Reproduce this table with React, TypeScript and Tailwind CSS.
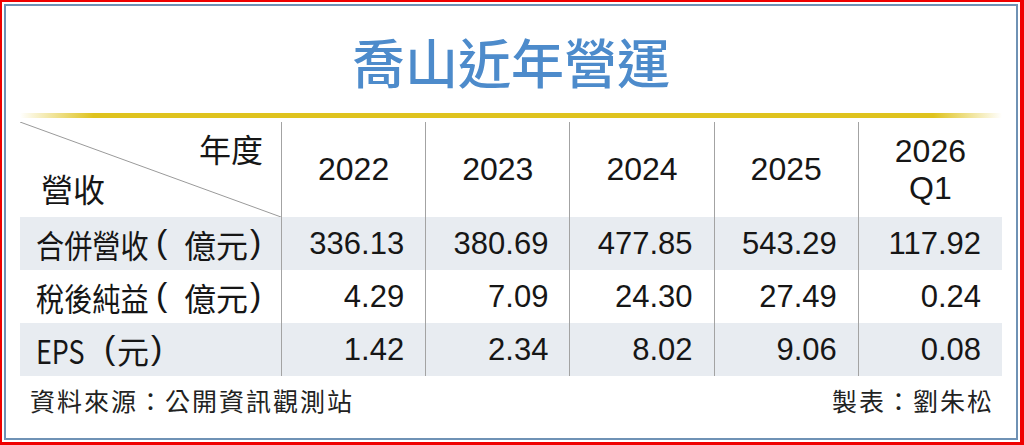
import React from "react";

const CJK = "font-['Noto_Sans_CJK_TC','Noto_Sans_CJK_SC',sans-serif]";
const NUM = "font-['Liberation_Sans','Arial',sans-serif]";

const years: { a: string; b?: string }[] = [
  { a: "2022" },
  { a: "2023" },
  { a: "2024" },
  { a: "2025" },
  { a: "2026", b: "Q1" },
];

type Row = {
  main: string;
  mainW: string;
  scale: string;
  unit: string;
  parenW: string;
  vals: string[];
  gray: boolean;
};

const rows: Row[] = [
  {
    main: "合併營收",
    mainW: "w-[120px]",
    scale: "[transform:scaleX(0.88)]",
    unit: "億元",
    parenW: "w-[28px]",
    vals: ["336.13", "380.69", "477.85", "543.29", "117.92"],
    gray: true,
  },
  {
    main: "稅後純益",
    mainW: "w-[120px]",
    scale: "[transform:scaleX(0.88)]",
    unit: "億元",
    parenW: "w-[28px]",
    vals: ["4.29", "7.09", "24.30", "27.49", "0.24"],
    gray: false,
  },
  {
    main: "EPS",
    mainW: "w-[68px]",
    scale: "[transform:scaleX(0.84)]",
    unit: "元",
    parenW: "w-[13px]",
    vals: ["1.42", "2.34", "8.02", "9.06", "0.08"],
    gray: true,
  },
];

function Label({ r }: { r: Row }) {
  return (
    <div className={`${CJK} flex items-center text-[32px] leading-[32px] whitespace-nowrap`}>
      <div className={`${r.mainW} shrink-0`}>
        <span className={`inline-block origin-left ${r.scale}`}>{r.main}</span>
      </div>
      <div className={`${r.parenW} shrink-0 mb-[6px] ${NUM} text-[34px] leading-[32px]`}>(</div>
      <span className="inline-block">{r.unit}</span>
      <span className={`inline-block ml-[2px] mb-[6px] ${NUM} text-[34px] leading-[32px]`}>)</span>
    </div>
  );
}

export default function App() {
  return (
    <div className="w-[1024px] h-[445px] bg-white border-solid border-[#f00000] border-t-2 border-l-2 border-b-[3px] border-r-[4px] p-[2px] overflow-hidden">
      <div className="h-full border-2 border-solid border-[#6f92b5] px-[14px] text-[#161616]">
        {/* Title */}
        <div
          className={`${CJK} mt-[29px] h-[53px] text-[53px] leading-[53px] text-center text-[#4d8bcb] font-medium`}
        >
          喬山近年營運
        </div>
        {/* Gold rule */}
        <div className="mt-[25px] h-[5px] bg-[linear-gradient(to_right,#ffffff_0%,#dfc31e_7.5%,#dfc31e_93%,#ffffff_100%)]" />

        {/* Table */}
        <div className="mt-[4px] grid grid-cols-[261px_repeat(5,1fr)]">
          {/* Header */}
          <div className="relative h-[95px] flex flex-col">
            <svg className="absolute inset-0" width="261" height="95" viewBox="0 0 261 95">
              <line x1="0" y1="0" x2="261" y2="95" stroke="#9a9a9a" strokeWidth="1" />
            </svg>
            <div className={`${CJK} pt-[10px] pr-[18px] text-right text-[32px] leading-[32px]`}>年度</div>
            <div className={`${CJK} mt-[8px] pl-[21px] text-[32px] leading-[32px]`}>營收</div>
          </div>
          {years.map((y) => (
            <div
              key={y.a}
              className={`${NUM} h-[95px] border-l border-solid border-[#a3a3a3] flex flex-col items-center justify-center text-[32px] leading-[37px]`}
            >
              <div>{y.a}</div>
              {y.b && <div>{y.b}</div>}
            </div>
          ))}

          {/* Data rows */}
          {rows.map((r) => (
            <React.Fragment key={r.main}>
              <div
                className={`h-[53px] flex items-center pl-[16px] ${r.gray ? "bg-[#e8ecf1]" : "bg-white"}`}
              >
                <Label r={r} />
              </div>
              {r.vals.map((v, i) => (
                <div
                  key={i}
                  className={`${NUM} h-[53px] border-l border-solid border-[#a3a3a3] flex items-center justify-end pr-[21px] text-[31px] leading-[31px] ${
                    r.gray ? "bg-[#e8ecf1]" : "bg-white"
                  }`}
                >
                  {v}
                </div>
              ))}
            </React.Fragment>
          ))}
        </div>

        {/* Footer */}
        <div className={`${CJK} mt-[12px] flex justify-between px-[10px] text-[25px] leading-[25px] tracking-[2px] text-[#222]`}>
          <span>資料來源：公開資訊觀測站</span>
          <span className="mr-[-2px]">製表：劉朱松</span>
        </div>
      </div>
    </div>
  );
}
